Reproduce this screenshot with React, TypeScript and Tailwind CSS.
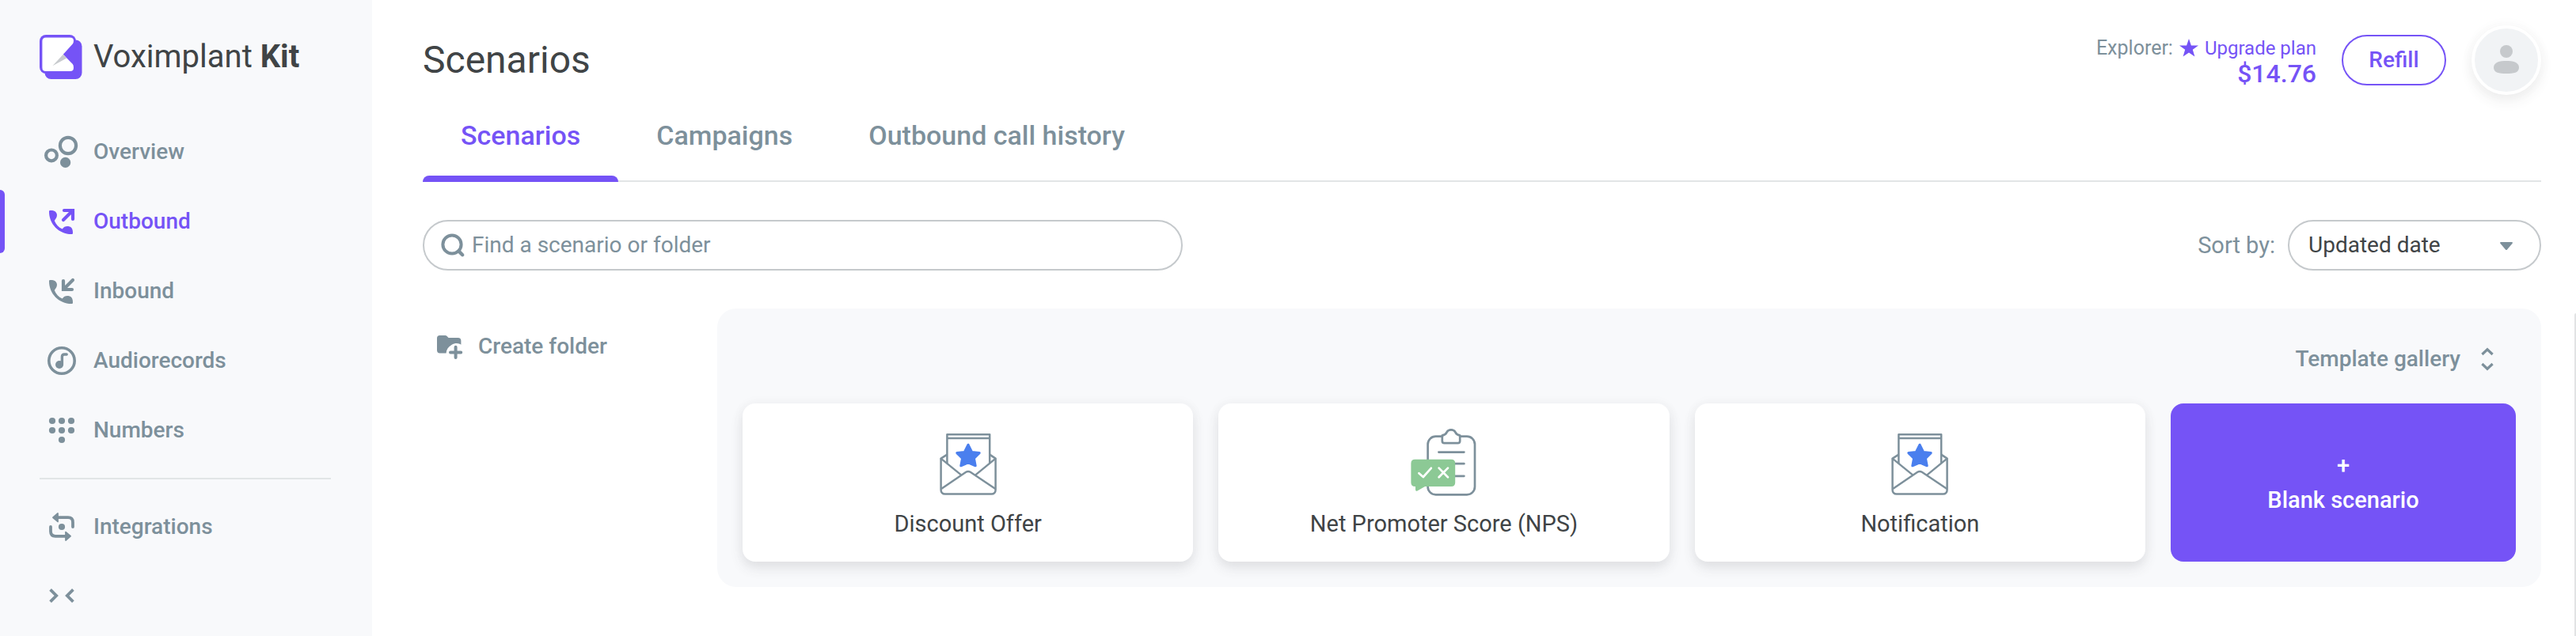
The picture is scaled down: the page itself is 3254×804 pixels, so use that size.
import React from "react";

const HANDSET =
  "M8 11.2 Q8 10 9.2 10 C13.5 9.6 17.8 11.2 18 15.8 C18 19 16.2 20.6 14.8 23 C16.6 27.6 20 31.4 24.8 33.6 C26.4 30.6 29.4 29.6 32.4 30 C37 30.8 38.2 34.6 38 38.8 Q38 40 36.8 40 C21 40.4 7.8 27.4 8 11.2Z";

const LogoIcon = () => (
  <svg width="54" height="56" viewBox="0 0 54 56" aria-hidden="true">
    <rect width="46" height="49" rx="8" fill="#7553f6" />
    <rect x="6.5" y="6.5" width="47" height="49.5" rx="8" fill="#7553f6" />
    <path
      d="M8 3.4H38.6Q43 3.4 43 7.6Q43 10 41.8 11.4L29.8 24.8L41.8 37Q43 38.4 43 41.4Q43 46 38.6 46H8Q3.4 46 3.4 41.4V8Q3.4 3.4 8 3.4Z"
      fill="#fff"
    />
    <path d="M29.8 24.8L34.2 29.4L16.4 39.2Z" fill="#c8cbce" />
  </svg>
);

const OverviewIcon = () => (
  <svg width="48" height="48" viewBox="0 0 48 48" fill="none" aria-hidden="true">
    <circle cx="32" cy="16" r="10.1" stroke="currentColor" strokeWidth="4.2" />
    <circle cx="11" cy="28.4" r="6.9" stroke="currentColor" strokeWidth="4.2" />
    <circle cx="28.6" cy="37.4" r="6.6" fill="currentColor" />
  </svg>
);

const OutboundIcon = () => (
  <svg width="48" height="48" viewBox="0 0 48 48" fill="none" aria-hidden="true">
    <path d={HANDSET} fill="currentColor" />
    <path
      d="M27 10H38V21M26 22L37 11"
      stroke="currentColor"
      strokeWidth="4.2"
      strokeLinecap="round"
    />
  </svg>
);

const InboundIcon = () => (
  <svg width="48" height="48" viewBox="0 0 48 48" fill="none" aria-hidden="true">
    <path d={HANDSET} fill="currentColor" />
    <path
      d="M26 11V22H37M38 10L27 21"
      stroke="currentColor"
      strokeWidth="4.2"
      strokeLinecap="round"
    />
  </svg>
);

const AudioIcon = () => (
  <svg width="48" height="48" viewBox="0 0 48 48" fill="none" aria-hidden="true">
    <circle cx="24" cy="24" r="16.2" stroke="currentColor" strokeWidth="3.6" />
    <circle cx="21" cy="29" r="5" fill="currentColor" />
    <path
      d="M24.4 29V19Q24.4 16 27.4 16H30.2"
      stroke="currentColor"
      strokeWidth="3.4"
      strokeLinecap="round"
    />
  </svg>
);

const NumbersIcon = () => (
  <svg width="48" height="48" viewBox="0 0 48 48" fill="currentColor" aria-hidden="true">
    <circle cx="12" cy="12" r="4.1" />
    <circle cx="24" cy="12" r="4.1" />
    <circle cx="36" cy="12" r="4.1" />
    <circle cx="12" cy="24" r="4.1" />
    <circle cx="24" cy="24" r="4.1" />
    <circle cx="36" cy="24" r="4.1" />
    <circle cx="24" cy="36" r="4.1" />
  </svg>
);

const IntegrationsIcon = () => (
  <svg width="48" height="48" viewBox="0 0 48 48" fill="none" aria-hidden="true">
    <path
      d="M18 12.2H32Q38 12.2 38 18.2V24M30 35.8H16Q10 35.8 10 29.8V24"
      stroke="currentColor"
      strokeWidth="3.8"
      strokeLinecap="round"
    />
    <path
      d="M13 12.2L19 7V17.4ZM35 35.8L29 41V30.6Z"
      fill="currentColor"
      stroke="currentColor"
      strokeWidth="1.8"
      strokeLinejoin="round"
    />
    <circle cx="24" cy="24" r="4.1" fill="currentColor" />
  </svg>
);

const CollapseIcon = () => (
  <svg width="48" height="48" viewBox="0 0 48 48" fill="none" aria-hidden="true">
    <path
      d="M9.6 15.4L17.2 23L9.6 30.6M38.4 15.4L30.8 23L38.4 30.6"
      stroke="currentColor"
      strokeWidth="3.8"
    />
  </svg>
);

const SearchIcon = () => (
  <svg width="32" height="32" viewBox="0 0 32 32" fill="none" aria-hidden="true">
    <circle cx="15" cy="15" r="11.6" stroke="currentColor" strokeWidth="4" />
    <path d="M23.4 23.4L28.2 28.2" stroke="currentColor" strokeWidth="4.4" strokeLinecap="round" />
  </svg>
);

const StarIcon = () => (
  <svg width="24" height="24" viewBox="0 0 24 24" fill="currentColor" aria-hidden="true">
    <path d="M12 0L14.9 8.4H24L16.8 13.8L19.4 22.6L12 17.4L4.6 22.6L7.2 13.8L0 8.4H9.1Z" />
  </svg>
);

const UserIcon = () => (
  <svg width="32" height="46" viewBox="0 0 32 46" fill="#c6c9cc" aria-hidden="true">
    <circle cx="16" cy="8" r="8" />
    <path d="M16 20C24 20 32 21.4 32 28.4C32 34.6 25.4 36 16 36S0 34.6 0 28.4C0 21.4 8 20 16 20Z" />
  </svg>
);

const FolderPlusIcon = () => (
  <svg width="36" height="36" viewBox="0 0 36 36" aria-hidden="true">
    <path
      d="M5.5 4H12.4Q13.6 4 14.4 4.8L16.6 7H28.6Q32.4 7 32.4 10.8V15.8C29.6 13.6 25 13 20.4 16C15.8 19 13.8 22.4 13.6 26.4H5.6Q2 26.4 2 22.8V7.6Q2 4 5.5 4Z"
      fill="currentColor"
    />
    <path
      d="M25.6 18.8V32M19 25.4H32.2"
      stroke="currentColor"
      strokeWidth="4"
      strokeLinecap="round"
    />
  </svg>
);

const UnfoldIcon = () => (
  <svg width="32" height="32" viewBox="0 0 32 32" fill="none" aria-hidden="true">
    <path
      d="M9.4 10L16 3.8L22.6 10M9.4 22L16 28.2L22.6 22"
      stroke="currentColor"
      strokeWidth="3.2"
    />
  </svg>
);

const EnvelopeIcon = () => (
  <svg width="96" height="96" viewBox="14 22 96 96" fill="none" aria-hidden="true">
    <g stroke="#7d909b" strokeWidth="2.5" strokeLinejoin="round">
      <path d="M35.4 66V29.2H89.2V66M35.4 34H89.2" />
      <path d="M35.4 54.6L27.6 59.6L53.4 80.6M89.2 54.6L96.6 59.6L71 80.6" />
      <path d="M27.6 59.6V99.4A5 5 0 0 0 32.6 104.6H91.6A5 5 0 0 0 96.6 99.4V59.6" />
      <path d="M28 98L59.2 76.8Q62 75 64.8 76.8L96.4 98" />
    </g>
    <path
      d="M62 42.2L66.6 51.4L76.2 52.6L69.4 59.4L71.2 68.8L62 64.8L52.8 68.8L54.6 59.4L47.8 52.6L57.4 51.4Z"
      fill="#4a7fee"
      stroke="#4a7fee"
      strokeWidth="3"
      strokeLinejoin="round"
    />
  </svg>
);

const ClipboardIcon = () => (
  <svg width="96" height="96" viewBox="16 22 96 96" fill="none" aria-hidden="true">
    <g stroke="#7d909b" strokeWidth="2.7" strokeLinecap="round" strokeLinejoin="round">
      <path d="M62 31.7H53.6A10 10 0 0 0 43.6 41.7V95.3A10 10 0 0 0 53.6 105.3H93A10 10 0 0 0 103 95.3V41.7A10 10 0 0 0 93 31.7H84.4" />
      <path d="M61.8 30.4C65.6 30 66.6 28.6 67.6 26.4C68.6 24.2 70.6 23.3 73 23.3S77.4 24.2 78.4 26.4C79.4 28.6 80.4 30 84.2 30.4V37.6Q84.2 40.2 81.6 40.2H64.4Q61.8 40.2 61.8 37.6Z" />
      <path d="M57.4 51.6H89.4M76 66.2H89.4M76 81.8H89.4" />
    </g>
    <path
      d="M27.4 60.8H73.2Q78.2 60.8 78.2 65.8V90Q78.2 95 73.2 95H40L30.4 100.4Q28 101.4 28 98.8V95H27.4Q22.4 95 22.4 90V65.8Q22.4 60.8 27.4 60.8Z"
      fill="#8cc995"
    />
    <path
      d="M32.4 78.2L37.8 83L47.8 71.8M57.6 71.6L69 83.2M69 71.6L57.6 83.2"
      stroke="#fff"
      strokeWidth="2.7"
      strokeLinecap="round"
      strokeLinejoin="round"
    />
  </svg>
);

const navItems = [
  { title: "Overview", icon: OverviewIcon },
  { title: "Outbound", icon: OutboundIcon, active: true },
  { title: "Inbound", icon: InboundIcon },
  { title: "Audiorecords", icon: AudioIcon },
  { title: "Numbers", icon: NumbersIcon },
];

const tabs = ["Scenarios", "Campaigns", "Outbound call history"];

const templates = [
  { title: "Discount Offer", icon: EnvelopeIcon },
  { title: "Net Promoter Score (NPS)", icon: ClipboardIcon },
  { title: "Notification", icon: EnvelopeIcon },
];

type NavItemProps = {
  title: string;
  icon: React.FC;
  active?: boolean;
};

const NavItem = ({ title, icon: Icon, active }: NavItemProps) => (
  <a
    href="#"
    aria-current={active ? "page" : undefined}
    className={`relative flex h-20 items-center gap-4 pl-[54px] text-[28px] leading-10 font-medium ${
      active ? "text-[#7553f6]" : "text-[#7d909b]"
    }`}
  >
    {active && (
      <span className="absolute inset-y-0 left-0 w-1.5 rounded-r-lg bg-[#7553f6]" />
    )}
    <Icon />
    {title}
  </a>
);

const Sidebar = () => (
  <aside className="w-[470px] shrink-0 bg-[#f8f9fb] pt-11">
    <a href="#" className="flex items-center gap-3.5 pl-[50px] text-[40px] leading-12">
      <LogoIcon />
      <span>
        Voximplant <b className="font-bold">Kit</b>
      </span>
    </a>

    <nav className="mt-13">
      <div className="flex flex-col gap-2">
        {navItems.map((item) => (
          <NavItem key={item.title} {...item} />
        ))}
      </div>
      <hr className="mt-5 mr-[52px] mb-5 ml-[50px] border-t-2 border-[#e2e5e6]" />
      <NavItem title="Integrations" icon={IntegrationsIcon} />
    </nav>

    <button
      aria-label="Collapse menu"
      className="mt-2 flex h-20 items-center pl-[54px] text-[#7d909b]"
    >
      <CollapseIcon />
    </button>
  </aside>
);

const Header = () => (
  <header className="flex h-[88px] items-center justify-between">
    <h1 className="text-[48px] leading-16">Scenarios</h1>

    <div className="flex items-center gap-8">
      <div className="pt-0.5 text-right">
        <div className="flex items-center gap-2 leading-8 text-[#7d909b]">
          <span className="text-[25px]">Explorer:</span>
          <a href="#" className="flex items-center gap-2 text-[24px] text-[#7553f6]">
            <StarIcon />
            Upgrade plan
          </a>
        </div>
        <div className="text-[32px] leading-8 font-medium text-[#7553f6]">$14.76</div>
      </div>
      <button className="h-16 w-[132px] rounded-full border-2 border-[#7553f6] text-[28px] font-medium text-[#7553f6]">
        Refill
      </button>
      <button
        aria-label="Account"
        className="flex size-22 items-center justify-center rounded-full border-4 border-white bg-[#f1f3f5] pt-2 shadow-[0_8px_16px_rgba(64,68,70,0.08),0_0_16px_rgba(64,68,70,0.04)]"
      >
        <UserIcon />
      </button>
    </div>
  </header>
);

const Tabs = () => (
  <div role="tablist" className="flex border-b-2 border-[#e2e5e6]">
    {tabs.map((tab, index) => (
      <button
        key={tab}
        role="tab"
        aria-selected={index === 0}
        className={`relative -mb-0.5 px-12 pt-[31px] pb-[39px] text-[34px] leading-10 font-medium ${
          index === 0 ? "text-[#7553f6]" : "text-[#7d909b]"
        }`}
      >
        {tab}
        {index === 0 && (
          <span className="absolute inset-x-0 bottom-0 h-2 rounded-t-lg bg-[#7553f6]" />
        )}
      </button>
    ))}
  </div>
);

const Filters = () => (
  <div className="mt-12 flex items-center justify-between text-[28px] leading-10">
    <label className="flex h-16 w-[960px] items-center gap-2 rounded-full border-2 border-[#c5c9cc] pl-5 text-[#7d909b]">
      <SearchIcon />
      <input
        type="text"
        aria-label="Find a scenario or folder"
        placeholder="Find a scenario or folder"
        className="min-w-0 flex-1 bg-transparent outline-none placeholder:text-[#7d909b]"
      />
    </label>

    <div className="flex items-center gap-4">
      <label htmlFor="sort" className="text-[29px] text-[#7d909b]">
        Sort by:
      </label>
      <div className="relative w-80">
        <select
          id="sort"
          className="h-16 w-full appearance-none rounded-full border-2 border-[#c5c9cc] bg-white pl-6 text-[#404446]"
        >
          <option>Updated date</option>
        </select>
        <svg
          className="pointer-events-none absolute top-7 right-9"
          width="16"
          height="10"
          viewBox="0 0 16 10"
          aria-hidden="true"
        >
          <path d="M1 0H15Q16.4 0.4 15.6 1.8L9 9.4Q8 10.4 7 9.4L0.4 1.8Q-0.4 0.4 1 0Z" fill="#7d909b" />
        </svg>
      </div>
    </div>
  </div>
);

const Gallery = () => (
  <section className="flex-1 rounded-3xl bg-[#f8f9fb] px-8 pt-11 pb-8">
    <div className="flex justify-end">
      <button className="mr-5 flex items-center gap-[18px] text-[28px] leading-10 font-medium text-[#7d909b]">
        Template gallery
        <UnfoldIcon />
      </button>
    </div>

    <div className="mt-9 flex gap-8 text-[29px]">
      {templates.map(({ title, icon: Icon }) => (
        <button
          key={title}
          className="flex h-[200px] flex-1 flex-col items-center gap-1 rounded-2xl bg-white pt-8 leading-10 shadow-[0_8px_16px_rgba(64,68,70,0.12),0_0_16px_rgba(64,68,70,0.04)]"
        >
          <Icon />
          {title}
        </button>
      ))}
      <button className="flex h-[200px] w-[436px] flex-col items-center justify-center rounded-2xl bg-[#7553f6] leading-11 font-medium text-white">
        <span>+</span>
        <span>Blank scenario</span>
      </button>
    </div>
  </section>
);

const App = () => {
  return (
    <div className="flex min-h-screen bg-white font-['Roboto',sans-serif] text-[#404446]">
      <Sidebar />
      <main className="relative flex-1 pt-8 pr-11 pl-16">
        <Header />
        <Tabs />
        <Filters />
        <div className="mt-12 flex items-start">
          <div className="w-[372px] shrink-0">
            <button className="flex h-24 items-center gap-[18px] pl-4 text-[28px] font-medium text-[#7d909b]">
              <FolderPlusIcon />
              Create folder
            </button>
          </div>
          <Gallery />
        </div>
        {/* Scroll thumb at the window edge */}
        <span className="absolute top-[396px] right-0 bottom-0 w-0.5 rounded-tl-sm bg-[#e2e3e4]" />
      </main>
    </div>
  );
};

export default App;
